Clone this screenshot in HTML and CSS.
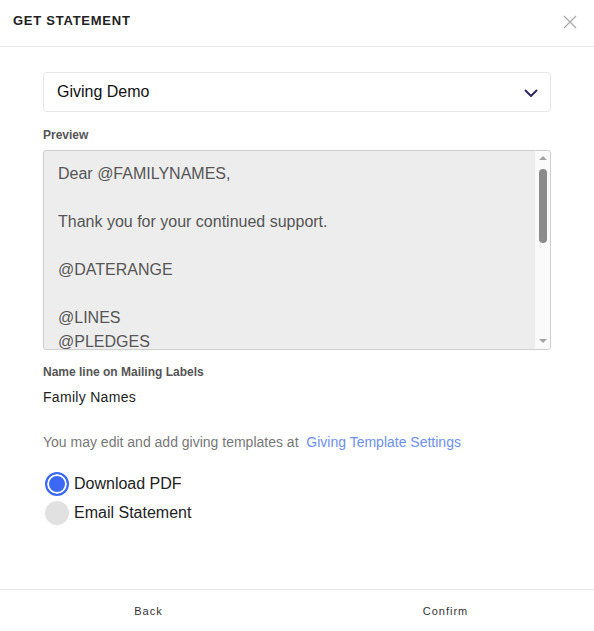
FILE: index.html
```html
<!DOCTYPE html>
<html>
<head>
<meta charset="utf-8">
<link rel="stylesheet" href="styles.css">
</head>
<body>
<div class="modal">
  <div class="header">
    <div class="title">GET STATEMENT</div>
    <svg class="close" width="14" height="14" viewBox="0 0 14 14"><path d="M1 1L13 13M13 1L1 13" stroke="#a8a8a8" stroke-width="1.2" fill="none"/></svg>
  </div>
  <div class="body">
    <div class="select">
      <span>Giving Demo</span>
      <svg width="14" height="9" viewBox="0 0 14 9"><path d="M1.5 1.5L7 7L12.5 1.5" stroke="#2e2c5e" stroke-width="2" fill="none" stroke-linecap="round" stroke-linejoin="round"/></svg>
    </div>
    <div class="label label-preview">Preview</div>
    <div class="preview">
      <div class="preview-text">Dear @FAMILYNAMES,<br><br>Thank you for your continued support.<br><br>@DATERANGE<br><br>@LINES<br>@PLEDGES</div>
      <div class="scrollbar">
        <div class="arrow up"></div>
        <div class="track"><div class="thumb"></div></div>
        <div class="arrow down"></div>
      </div>
    </div>
    <div class="label label-name">Name line on Mailing Labels</div>
    <div class="name-value">Family Names</div>
    <div class="info">You may edit and add giving templates at&nbsp; <span class="link">Giving Template Settings</span></div>
    <div class="radios">
      <div class="radio-row"><span class="radio checked"></span><span class="radio-label">Download PDF</span></div>
      <div class="radio-row"><span class="radio"></span><span class="radio-label">Email Statement</span></div>
    </div>
  </div>
  <div class="footer">
    <div class="btn">Back</div>
    <div class="btn">Confirm</div>
  </div>
</div>
</body>
</html>
```

FILE: styles.css
```css
* { box-sizing: border-box; }
html, body { margin: 0; padding: 0; background: #fff; }
body { font-family: "Liberation Sans", Arial, sans-serif; }

.modal {
  width: 594px;
  height: 631px;
  display: flex;
  flex-direction: column;
}

.header {
  height: 47px;
  border-bottom: 1px solid #e9e9e9;
  display: flex;
  align-items: center;
  justify-content: space-between;
  padding: 0 17px 5px 13px;
}
.title {
  font-size: 13px;
  font-weight: bold;
  letter-spacing: 0.75px;
  color: #222;
}
.close { display: block; margin-top: 2px; }

.body {
  flex: 1;
  padding: 25px 43px 0 43px;
}

.select {
  height: 40px;
  border: 1px solid #e6e6e6;
  border-radius: 4px;
  display: flex;
  align-items: center;
  justify-content: space-between;
  padding: 0 12px 0 13px;
  font-size: 16px;
  color: #111;
}
.select svg { display: block; margin-top: 2px; }

.label {
  font-size: 12px;
  font-weight: bold;
  color: #555;
  line-height: 15px;
}
.label-preview { margin-top: 16px; }
.label-name { margin-top: 15px; }

.preview {
  margin-top: 7px;
  height: 200px;
  border: 1px solid #cfcfcf;
  border-radius: 3px;
  background: #ededed;
  display: flex;
  overflow: hidden;
}
.preview-text {
  flex: 1;
  padding: 11px 14px 0;
  font-size: 16px;
  line-height: 24px;
  color: #555;
  overflow: hidden;
}
.scrollbar {
  width: 15px;
  background: #fafafa;
  display: flex;
  flex-direction: column;
  align-items: center;
}
.arrow {
  width: 0; height: 0;
  border-left: 4px solid transparent;
  border-right: 4px solid transparent;
}
.arrow.up { border-bottom: 4px solid #a3a3a3; margin-top: 5px; }
.arrow.down { border-top: 4px solid #a3a3a3; margin-bottom: 6px; margin-top: auto; }
.track { flex: 1; width: 100%; display: flex; justify-content: center; padding-top: 9px; }
.thumb { width: 8px; height: 74px; background: #8b8b8b; border-radius: 4px; }

.name-value {
  margin-top: 9px;
  font-size: 14px;
  letter-spacing: 0.3px;
  color: #222;
  line-height: 16px;
}
.info {
  margin-top: 29px;
  font-size: 14px;
  color: #777;
  line-height: 16px;
}
.link { color: #6c90f0; }

.radios { margin-top: 19px; padding-left: 2px; }
.radio-row {
  display: flex;
  align-items: center;
  height: 29px;
}
.radio {
  width: 24px; height: 24px;
  border-radius: 50%;
  background: #e1e1e1;
  margin-right: 5px;
}
.radio.checked {
  background: #3b69f5;
  border: 2px solid #3b69f5;
  box-shadow: inset 0 0 0 2px #fff;
}
.radio-label { font-size: 16px; color: #222; }

.footer {
  height: 42px;
  border-top: 1px solid #e9e9e9;
  display: grid;
  grid-template-columns: 1fr 1fr;
}
.btn {
  display: flex;
  align-items: center;
  justify-content: center;
  font-size: 11px;
  letter-spacing: 1px;
  color: #333;
}
```
